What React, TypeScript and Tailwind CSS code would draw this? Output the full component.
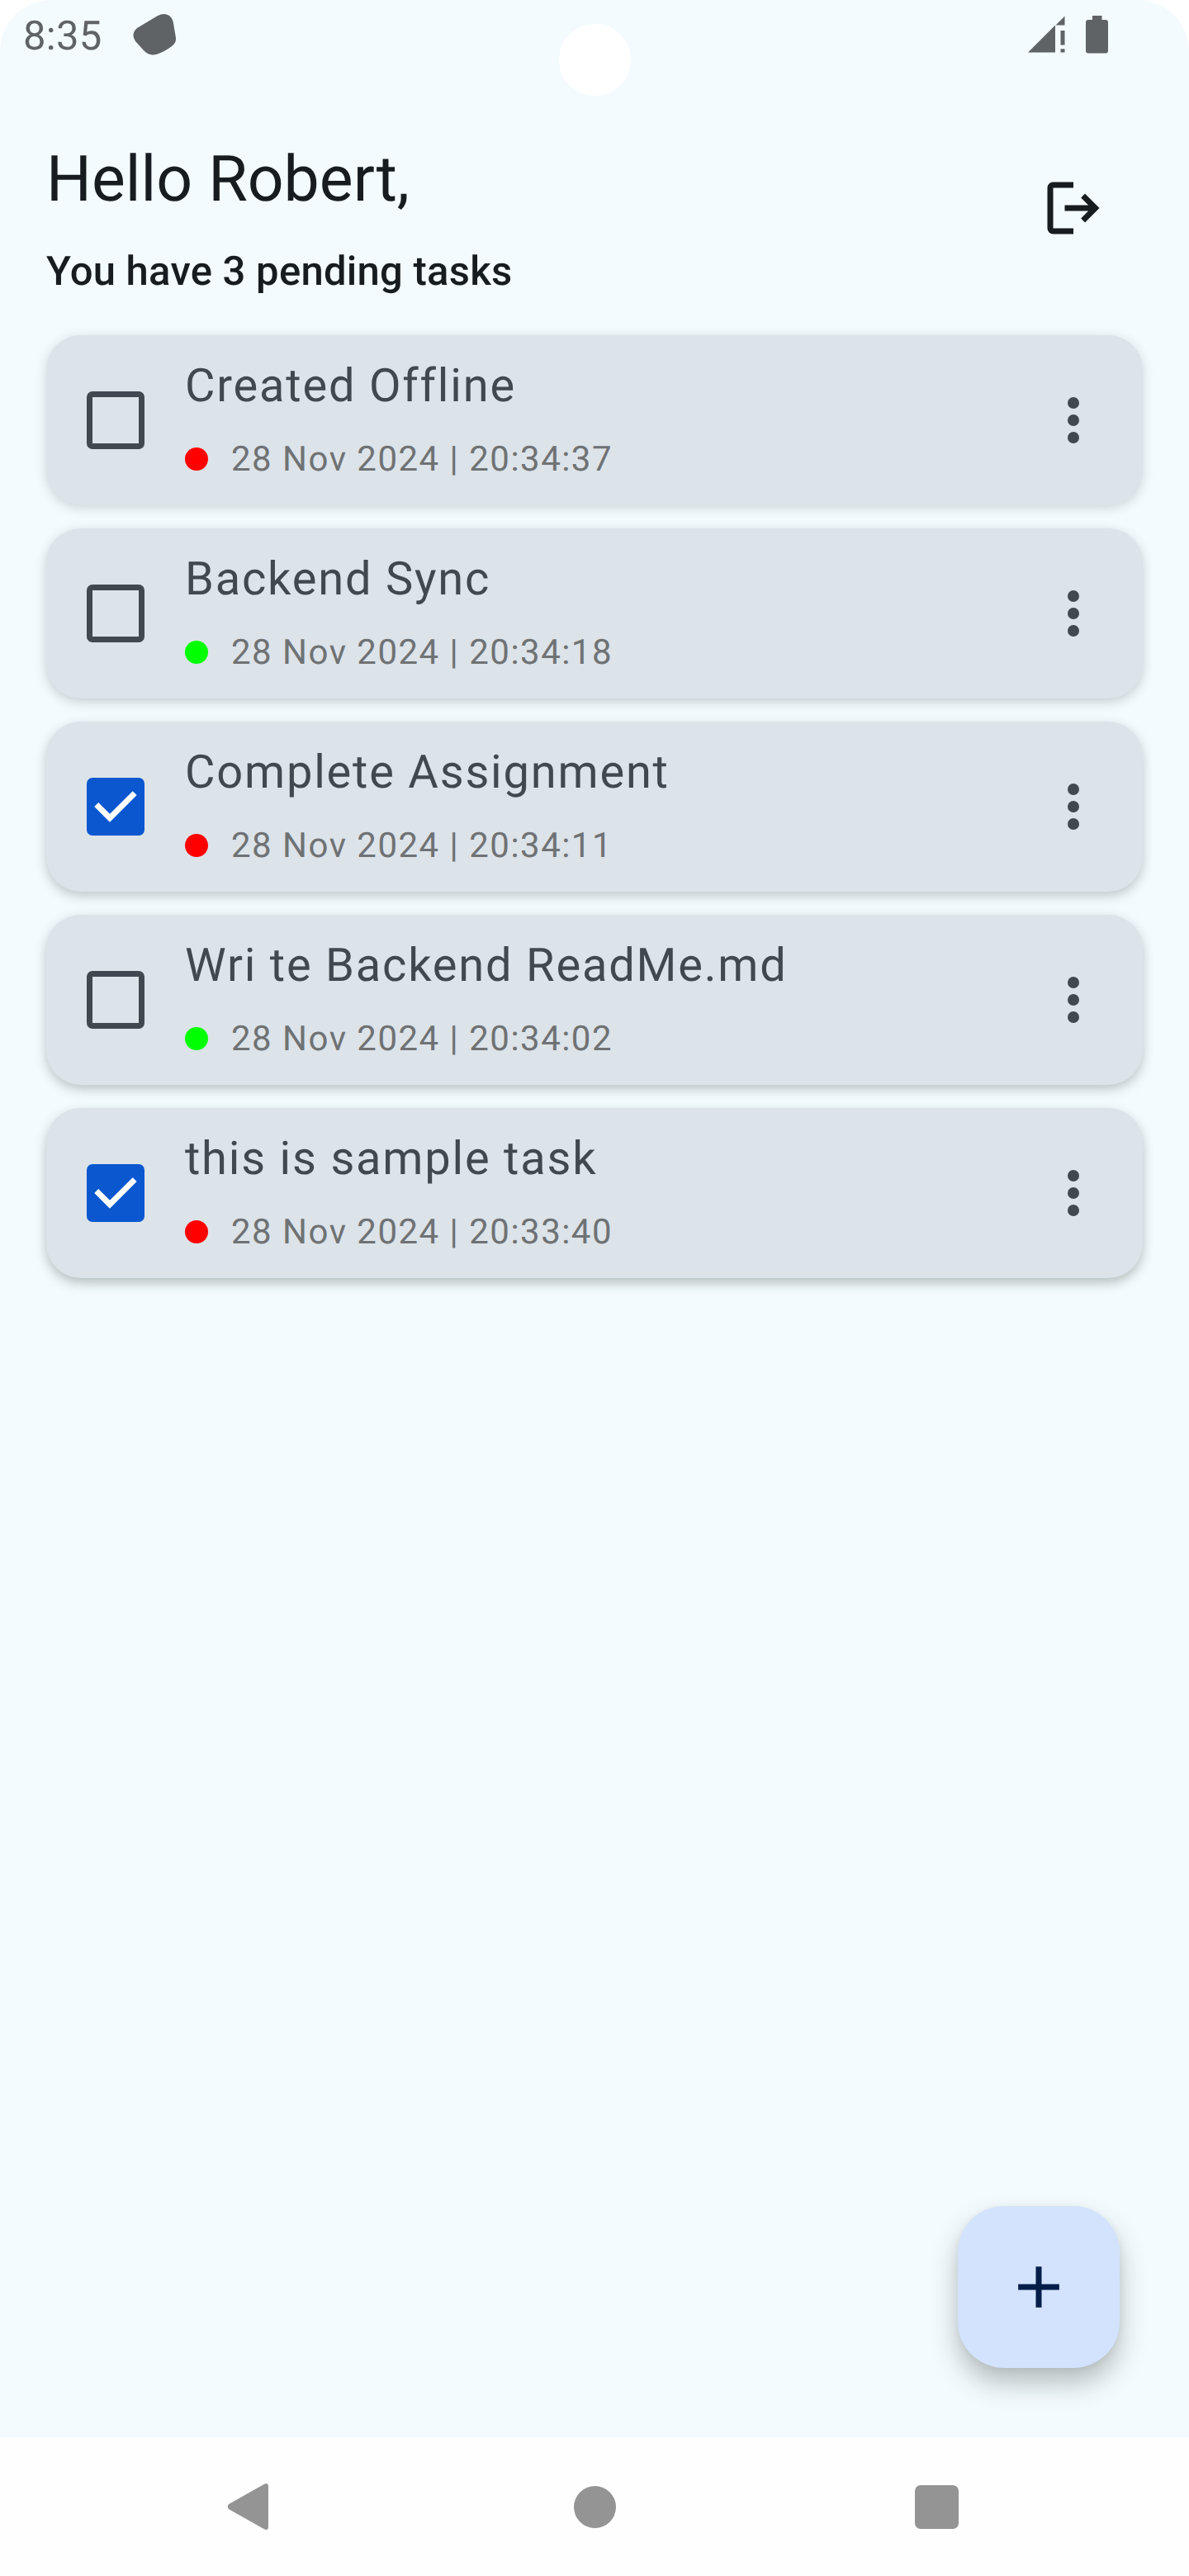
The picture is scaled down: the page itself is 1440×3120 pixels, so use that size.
type Task = {
  title: string;
  date: string;
  done: boolean;
  dot: string;
  shadow: string;
};

const RED = 'bg-[#ff0000]';
const GREEN = 'bg-[#00ff00]';

const tasks: Task[] = [
  { title: 'Created Offline', date: '28 Nov 2024 | 20:34:37', done: false, dot: RED, shadow: 'shadow-[0_3px_14px_rgba(50,60,50,0.20)]' },
  { title: 'Backend Sync', date: '28 Nov 2024 | 20:34:18', done: false, dot: GREEN, shadow: 'shadow-[0_4px_14px_rgba(50,60,50,0.24)]' },
  { title: 'Complete Assignment', date: '28 Nov 2024 | 20:34:11', done: true, dot: RED, shadow: 'shadow-[0_5px_14px_rgba(50,60,50,0.27)]' },
  { title: 'Wri te Backend ReadMe.md', date: '28 Nov 2024 | 20:34:02', done: false, dot: GREEN, shadow: 'shadow-[0_5px_14px_rgba(50,60,50,0.29)]' },
  { title: 'this is sample task', date: '28 Nov 2024 | 20:33:40', done: true, dot: RED, shadow: 'shadow-[0_6px_14px_rgba(50,60,50,0.31)]' },
];

function StatusBar() {
  return (
    <div className="flex h-[84px] items-start justify-between pl-7 pr-[98px] text-[#606366]">
      <div className="flex items-start">
        <span className="mt-[15px] w-[133px] text-[49px] leading-[57px] tracking-[0.3px]">8:35</span>
        <svg className="mt-[17px]" width="53" height="50" viewBox="161 17 53 50" fill="currentColor">
          <path d="M166 34 191 19Q199 15 205 19Q209 22 210 28L213 46Q213.500 52 208 56Q199 63 189 66Q180 68 174 61L164 50Q158 41 166 34Z" />
        </svg>
      </div>
      <div className="flex items-start gap-[25px] pt-[19px]">
        <svg width="45" height="46" viewBox="0 0 45 46" fill="currentColor">
          <path d="M0 44.500 33 11.500V44.500ZM33.500 11.500 44.500.5V11.500ZM39.500 18h5v17.500h-5ZM39.500 40.200h5v4.300h-5Z" />
        </svg>
        <svg width="27" height="46" viewBox="0 0 27 46" fill="currentColor">
          <path d="M8 0H19.500V5H24Q27 5 27 8V42.500Q27 45.500 24 45.500H3Q0 45.500 0 42.500V8Q0 5 3 5H8Z" />
        </svg>
      </div>
    </div>
  );
}

function Header() {
  return (
    <header className="flex h-[322px] items-start justify-between pl-14 pr-[98px] text-[#171c20]">
      <div>
        <h1 className="mt-[84px] text-[77px] leading-[98px]">Hello Robert,</h1>
        <p className="mt-[28px] text-[49px] font-medium leading-[70px] tracking-[0.25px]">You have 3 pending tasks</p>
      </div>
      <svg className="mt-[126px]" width="84" height="84" viewBox="0 -960 960 960" fill="currentColor">
        <path d="M200-120q-33 0-56.500-23.500T120-200v-560q0-33 23.500-56.500T200-840h280v80H200v560h280v80H200Zm440-160-55-58 102-102H360v-80h327L585-622l55-58 200 200-200 200Z" />
      </svg>
    </header>
  );
}

function CheckBox({ checked }: { checked: boolean }) {
  if (!checked) {
    return <div className="size-[70px] rounded-[7px] border-[7px] border-[#41484f]" />;
  }
  return (
    <div className="size-[70px] rounded-[7px] bg-[#0b57d0]">
      <svg width="70" height="70" viewBox="0 0 70 70" fill="none" stroke="#fff" strokeWidth="7">
        <path d="M11.700 32.500 28 48.800 58.200 18.600" />
      </svg>
    </div>
  );
}

function TaskCard({ task }: { task: Task }) {
  return (
    <li className={`flex h-[206px] items-center rounded-[42px] bg-[#dce3e9] pl-[49px] pr-[77px] ${task.shadow}`}>
      <CheckBox checked={task.done} />
      <div className="ml-[49px] flex h-full flex-1 flex-col">
        <div className="mt-[19px] h-[84px] text-[56px] leading-[84px] tracking-[1.8px] text-[#41484f]">{task.title}</div>
        <div className="mt-[19px] flex h-[56px] items-center">
          <span className={`size-7 rounded-full ${task.dot}`} />
          <span className="ml-7 pt-px text-[42px] leading-[56px] tracking-[1.48px] text-[#6f7274]">{task.date}</span>
        </div>
      </div>
      <div className="flex flex-col gap-[7px]">
        <span className="size-3.5 rounded-full bg-[#41484f]" />
        <span className="size-3.5 rounded-full bg-[#41484f]" />
        <span className="size-3.5 rounded-full bg-[#41484f]" />
      </div>
    </li>
  );
}

function NavBar() {
  return (
    <nav className="flex h-[168px] items-center bg-[#fefefe] pl-[275px] pr-[279px] text-[#949494]">
      <svg width="50" height="56" viewBox="0 0 50 56" fill="currentColor">
        <path d="M2 25 45 .8Q50-1.500 50 4V52Q50 57.500 45 55.200L2 31Q-.5 28 2 25Z" />
      </svg>
      <div className="ml-[369.500px] size-[51px] rounded-full bg-current" />
      <div className="ml-auto size-[53px] rounded-[7px] bg-current" />
    </nav>
  );
}

export default function App() {
  return (
    <div className="flex h-[3120px] w-[1440px] flex-col bg-white font-['Roboto',sans-serif] [text-rendering:geometricPrecision]">
      <div className="relative flex flex-1 flex-col rounded-t-[62px] bg-[#f3fbff]">
        <div className="absolute left-[677px] top-[29px] size-[87px] rounded-full bg-white" />
        <StatusBar />
        <Header />
        <ul className="flex flex-col gap-7 px-14">
          {tasks.map((task) => (
            <TaskCard key={task.title} task={task} />
          ))}
        </ul>
        <button className="mb-[84px] mr-[84px] mt-auto flex size-[196px] items-center justify-center self-end rounded-[56px] bg-[#d3e3fd] shadow-[0_18px_32px_rgba(40,45,40,0.30),0_2px_10px_rgba(40,45,40,0.06)]">
          <svg width="84" height="84" viewBox="0 0 24 24" fill="#041e49">
            <path d="M19.100 13h-6.100v6.100h-2V13H4.900v-2H11V4.900h2V11h6.100Z" />
          </svg>
        </button>
      </div>
      <NavBar />
    </div>
  );
}
